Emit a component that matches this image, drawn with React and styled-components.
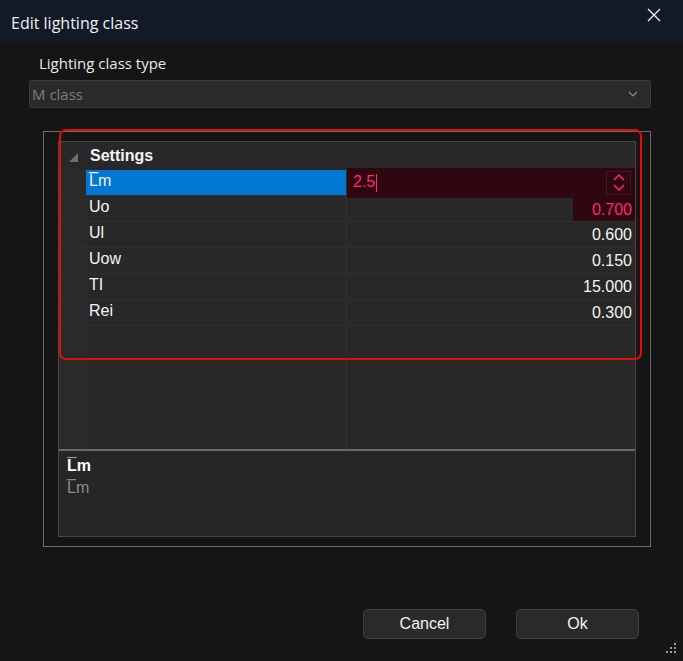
import React from 'react'
import styled, { createGlobalStyle } from 'styled-components'

const GlobalStyle = createGlobalStyle`
  html, body {
    margin: 0;
    padding: 0;
    background: #151515;
  }
  * { box-sizing: border-box; }
`

const Window = styled.div`
  position: relative;
  width: 683px;
  height: 661px;
  background: #151515;
  display: flex;
  flex-direction: column;
  overflow: hidden;
  font-family: 'Open Sans', 'Noto Sans', sans-serif;
  color: #ececec;
`

const TitleBar = styled.div`
  height: 42px;
  flex-shrink: 0;
  background: #111a26;
  display: flex;
  align-items: center;
  justify-content: space-between;
  padding: 4px 22px 0 11px;
  font-size: 16px;
  color: #f2f2f2;
`

const CloseButton = styled.div`
  width: 14px;
  height: 14px;
  margin-top: -17px;
  display: flex;
`

const Label = styled.div`
  margin: 11px 0 0 39px;
  font-size: 15px;
  color: #e8e8e8;
`

const Combo = styled.div`
  margin: 7px 32px 0 29px;
  height: 28px;
  border: 1px solid #3a3a3a;
  border-radius: 3px;
  background: #2a2a2a;
  display: flex;
  align-items: center;
  justify-content: space-between;
  padding: 0 12px 0 2px;
  font-size: 15px;
  color: #7c7c7c;
`

const Frame = styled.div`
  margin: 23px 0 0 43px;
  width: 608px;
  height: 416px;
  border: 1px solid #6c6c6c;
  padding: 9px 14px;
`

const Grid = styled.div`
  height: 100%;
  border: 1px solid #474747;
  background: #282828;
  display: flex;
  flex-direction: column;
  font-family: 'Liberation Sans', Arial, sans-serif;
  font-size: 16px;
  color: #f4f4f4;
`

const CategoryRow = styled.div`
  height: 28px;
  flex-shrink: 0;
  display: flex;
  align-items: center;
  font-weight: bold;
`

const Expander = styled.div`
  width: 31px;
  display: flex;
  justify-content: center;
  padding: 2px 2px 0 0;
`

const Row = styled.div`
  height: 26px;
  flex-shrink: 0;
  display: grid;
  grid-template-columns: 27px 261px 1fr;
  border-bottom: 1px solid #2f2f2f;
`

const Margin = styled.div`
  background: #2a2a2a;
`

const Name = styled.div`
  display: flex;
  align-items: center;
  padding: 0 0 3px 3px;
  background: ${p => (p.$selected ? '#0078d4' : 'transparent')};
  border-right: 1px solid #2f2f2f;
`

const Value = styled.div`
  position: relative;
  display: flex;
  align-items: center;
  justify-content: flex-end;
  padding: 0 3px 0 0;
  color: #f4f4f4;
`

const InvalidText = styled.span`
  background: #2e0711;
  color: #ff2a66;
  height: 24px;
  margin-right: -3px;
  padding: 2px 3px 0 19px;
  display: flex;
  align-items: center;
`

const Editor = styled.div`
  position: absolute;
  top: -2px;
  bottom: -3px;
  left: 0;
  right: 0;
  background: #2e0711;
  display: flex;
  align-items: center;
  justify-content: space-between;
  padding: 0 4px 1px 6px;
  color: #ff2a66;
`

const Caret = styled.span`
  display: inline-block;
  width: 1px;
  height: 18px;
  background: #ff2a66;
  margin-left: 1px;
  vertical-align: middle;
`

const Spinner = styled.div`
  width: 25px;
  height: 24px;
  border: 1px solid #4a1324;
  display: flex;
  flex-direction: column;
  align-items: center;
  justify-content: space-evenly;
`

const Empty = styled.div`
  flex: 1;
  display: grid;
  grid-template-columns: 27px 261px 1fr;
  border-bottom: 2px solid #6a6a6a;
`

const Column = styled.div`
  background: ${p => (p.$margin ? '#2a2a2a' : 'transparent')};
  border-right: ${p => (p.$divided ? '1px solid #2f2f2f' : 'none')};
`

const Help = styled.div`
  height: 85px;
  flex-shrink: 0;
  background: #262626;
  padding: 5px 8px;
  display: flex;
  flex-direction: column;
  gap: 2px;
`

const HelpTitle = styled.div`
  font-weight: bold;
  color: #ffffff;
  line-height: 20px;
`

const HelpText = styled.div`
  color: #8a8a8a;
  line-height: 20px;
`

const Footer = styled.div`
  margin-top: auto;
  display: flex;
  justify-content: flex-end;
  gap: 30px;
  padding: 0 44px 22px 0;
`

const Button = styled.button`
  width: 123px;
  height: 30px;
  border: 1px solid #3e3e3e;
  border-radius: 5px;
  background: #2a2a2a;
  color: #f2f2f2;
  font-family: 'Liberation Sans', Arial, sans-serif;
  font-size: 16px;
  padding: 0;
`

const Grip = styled.div`
  position: absolute;
  right: 5px;
  bottom: 6px;
  display: flex;
`

const Highlight = styled.div`
  position: absolute;
  left: 59px;
  top: 129px;
  width: 583px;
  height: 231px;
  border: 2px solid #e40b0b;
  border-radius: 7px;
  pointer-events: none;
`

const rows = [
  { name: 'Uo', value: '0.700', invalid: true },
  { name: 'Ul', value: '0.600' },
  { name: 'Uow', value: '0.150' },
  { name: 'TI', value: '15.000' },
  { name: 'Rei', value: '0.300' }
]

const Chevron = ({ up, color = '#ff2a66' }) => (
  <svg width="12" height="7" viewBox="0 0 12 7">
    <polyline
      points={up ? '1,6 6,1 11,6' : '1,1 6,6 11,1'}
      fill="none"
      stroke={color}
      strokeWidth="1.5"
    />
  </svg>
)

const App = () => (
  <Window>
    <GlobalStyle />
    <TitleBar>
      <span>Edit lighting class</span>
      <CloseButton>
        <svg width="14" height="14" viewBox="0 0 14 14">
          <path d="M1 1 L13 13 M13 1 L1 13" stroke="#f0f0f0" strokeWidth="1.3" />
        </svg>
      </CloseButton>
    </TitleBar>

    <Label>Lighting class type</Label>
    <Combo>
      <span>M class</span>
      <svg width="10" height="6" viewBox="0 0 10 6">
        <polyline points="1,1 5,5 9,1" fill="none" stroke="#8a8a8a" strokeWidth="1.2" />
      </svg>
    </Combo>

    <Frame>
      <Grid>
        <CategoryRow>
          <Expander>
            <svg width="9" height="9" viewBox="0 0 9 9">
              <polygon points="9,0 9,9 0,9" fill="#6e6e6e" />
            </svg>
          </Expander>
          Settings
        </CategoryRow>
        <Row>
          <Margin />
          <Name $selected>L̅m</Name>
          <Value>
            <Editor>
              <span>2.5<Caret /></span>
              <Spinner>
                <Chevron up />
                <Chevron />
              </Spinner>
            </Editor>
          </Value>
        </Row>
        {rows.map(r => (
          <Row key={r.name}>
            <Margin />
            <Name>{r.name}</Name>
            <Value>
              {r.invalid ? <InvalidText>{r.value}</InvalidText> : r.value}
            </Value>
          </Row>
        ))}
        <Empty>
          <Column $margin />
          <Column $divided />
          <Column />
        </Empty>
        <Help>
          <HelpTitle>L̅m</HelpTitle>
          <HelpText>L̅m</HelpText>
        </Help>
      </Grid>
    </Frame>

    <Footer>
      <Button>Cancel</Button>
      <Button>Ok</Button>
    </Footer>

    <Grip>
      <svg width="13" height="13" viewBox="0 0 13 13">
        <g fill="#9a9a9a">
          <rect x="9" y="1" width="2" height="2" />
          <rect x="5" y="5" width="2" height="2" />
          <rect x="9" y="5" width="2" height="2" />
          <rect x="1" y="9" width="2" height="2" />
          <rect x="5" y="9" width="2" height="2" />
          <rect x="9" y="9" width="2" height="2" />
        </g>
      </svg>
    </Grip>

    <Highlight />
  </Window>
)

export default App
